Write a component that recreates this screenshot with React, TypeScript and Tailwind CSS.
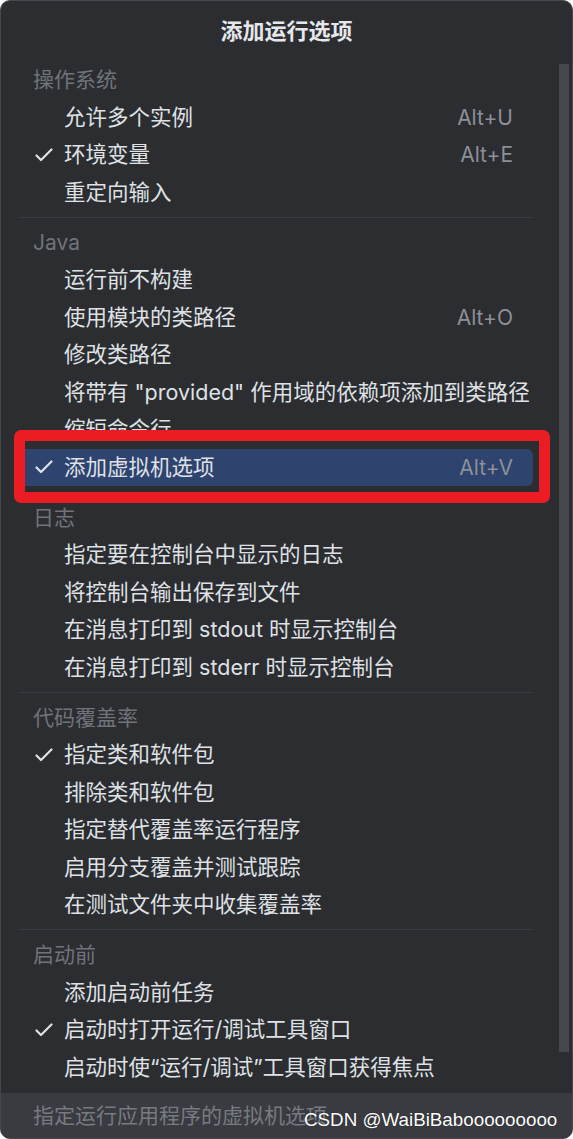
import React from 'react';

type Item = { label: string; checked?: boolean; shortcut?: string; selected?: boolean };
type Section = { title: string; items: Item[] };

const sections: Section[] = [
  {
    title: '操作系统',
    items: [
      { label: '允许多个实例', shortcut: 'Alt+U' },
      { label: '环境变量', checked: true, shortcut: 'Alt+E' },
      { label: '重定向输入' },
    ],
  },
  {
    title: 'Java',
    items: [
      { label: '运行前不构建' },
      { label: '使用模块的类路径', shortcut: 'Alt+O' },
      { label: '修改类路径' },
      { label: '将带有 "provided" 作用域的依赖项添加到类路径' },
      { label: '缩短命令行' },
      { label: '添加虚拟机选项', checked: true, shortcut: 'Alt+V', selected: true },
    ],
  },
  {
    title: '日志',
    items: [
      { label: '指定要在控制台中显示的日志' },
      { label: '将控制台输出保存到文件' },
      { label: '在消息打印到 stdout 时显示控制台' },
      { label: '在消息打印到 stderr 时显示控制台' },
    ],
  },
  {
    title: '代码覆盖率',
    items: [
      { label: '指定类和软件包', checked: true },
      { label: '排除类和软件包' },
      { label: '指定替代覆盖率运行程序' },
      { label: '启用分支覆盖并测试跟踪' },
      { label: '在测试文件夹中收集覆盖率' },
    ],
  },
  {
    title: '启动前',
    items: [
      { label: '添加启动前任务' },
      { label: '启动时打开运行/调试工具窗口', checked: true },
      { label: '启动时使“运行/调试”工具窗口获得焦点' },
    ],
  },
];

const Check = () => (
  <svg width="18" height="14" viewBox="0 0 18 14" fill="none">
    <path d="M1.5 7.5 L6 12 L16.5 1.5" stroke="#dfe1e5" strokeWidth="2.2" strokeLinecap="round" strokeLinejoin="round" />
  </svg>
);

const Row = ({ item }: { item: Item }) => (
  <div
    className={`h-[37.5px] flex items-center rounded-[6px] ${item.selected ? 'bg-[#2e436e]' : ''}`}
  >
    <div className="w-[45px] shrink-0 pl-[16px] flex items-center">{item.checked && <Check />}</div>
    <span className="flex-1 min-w-0 text-[21.5px] text-[#dfe1e5] whitespace-nowrap leading-none">{item.label}</span>
    {item.shortcut && (
      <span className="pr-[20px] text-[21px] text-[#8c9098] leading-none">{item.shortcut}</span>
    )}
  </div>
);

export default function App() {
  return (
    <div
      className="relative w-[573px] h-[1139px] bg-[#2b2d30] border border-[#45484d] rounded-[10px] overflow-hidden flex flex-col"
      style={{ fontFamily: 'Inter, "Noto Sans CJK SC", sans-serif' }}
    >
      {/* Title */}
      <div className="h-[60px] flex items-center justify-center shrink-0">
        <span className="text-[22px] font-bold text-[#e6e7ea]">添加运行选项</span>
      </div>

      {/* Body */}
      <div className="flex flex-1 min-h-0">
        <div className="flex-1 min-w-0 pl-[18px] pr-[26px]">
          {sections.map((s, i) => (
            <div key={s.title}>
              {i > 0 && (
                <div className="h-[12.5px] flex items-center">
                  <div className="h-px w-full bg-[#3a3c41]" />
                </div>
              )}
              <div className="h-[37.5px] flex items-center pl-[14px] text-[21px] text-[#6f737a] leading-none">
                {s.title}
              </div>
              {s.items.map((it) => (
                <Row key={it.label} item={it} />
              ))}
            </div>
          ))}
        </div>
        <div className="w-[13px] shrink-0 pt-[3px]">
          <div className="w-[10px] h-[988px] bg-[#46484c]" />
        </div>
      </div>

      {/* Footer */}
      <div className="h-[45px] shrink-0 bg-[#393b40] flex items-center pl-[32px]">
        <span className="text-[21px] text-[#767a81]">指定运行应用程序的虚拟机选项</span>
      </div>

      {/* Red annotation box */}
      <div className="absolute left-[13px] top-[429px] w-[536px] h-[73px] border-[11px] border-[#ec1c24] rounded-[7px]" />

      {/* Watermark */}
      <div
        className="absolute left-[303px] top-[1110px] text-[18.8px] text-white leading-none whitespace-nowrap"
        style={{ fontFamily: '"Liberation Sans", Arial, sans-serif', textShadow: '0 0 1px rgba(0,0,0,0.6)' }}
      >
        CSDN @WaiBiBabooooooooo
      </div>
    </div>
  );
}
